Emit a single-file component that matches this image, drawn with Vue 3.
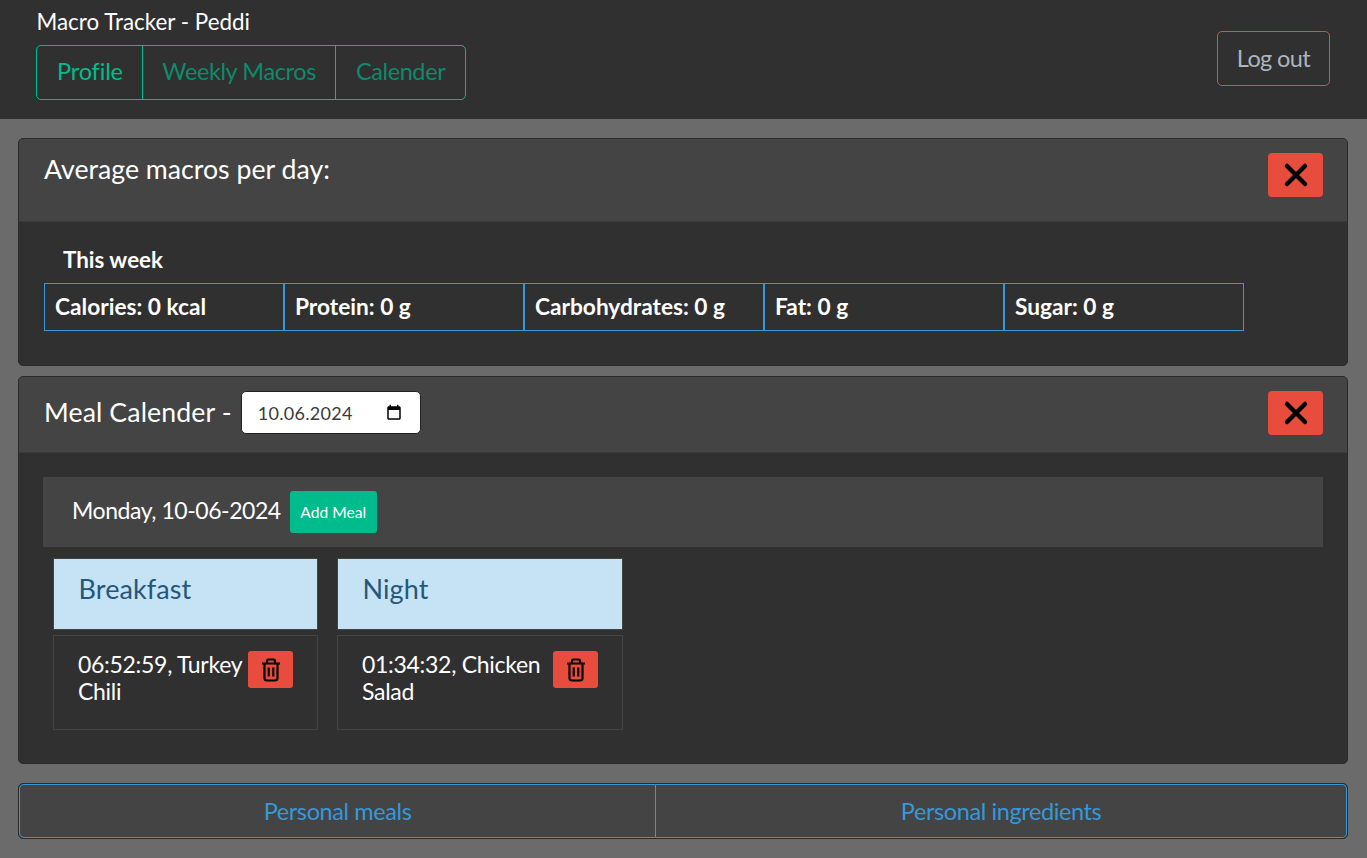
<template>
  <div class="page">
    <header class="topbar">
      <div class="brand">
        <div class="title">Macro Tracker - Peddi</div>
        <div class="nav-tabs">
          <a
            v-for="tab in tabs"
            :key="tab"
            class="nav-tab"
            :class="{ active: tab === activeTab }"
            @click="activeTab = tab"
          >{{ tab }}</a>
        </div>
      </div>
      <button class="logout">Log out</button>
    </header>

    <main class="content">
      <section class="card">
        <div class="card-head avg-head">
          <h2>Average macros per day:</h2>
          <button class="close-btn" aria-label="Close">
            <svg width="26" height="26" viewBox="0 0 26 26"><path d="M4 4L22 22M22 4L4 22" /></svg>
          </button>
        </div>
        <div class="card-body avg-body">
          <div class="week-label">This week</div>
          <div class="macro-row">
            <div v-for="macro in macros" :key="macro" class="macro-cell">{{ macro }}</div>
          </div>
        </div>
      </section>

      <section class="card">
        <div class="card-head cal-head">
          <div class="cal-title">
            <h2>Meal Calender -</h2>
            <label class="date-field">
              <input type="text" value="10.06.2024" />
              <svg width="18" height="18" viewBox="0 0 24 24">
                <path d="M19 3h-1V1h-2v2H8V1H6v2H5c-1.11 0-2 .9-2 2v14c0 1.1.89 2 2 2h14c1.1 0 2-.9 2-2V5c0-1.1-.9-2-2-2zm0 16H5V8h14v11z" />
              </svg>
            </label>
          </div>
          <button class="close-btn" aria-label="Close">
            <svg width="26" height="26" viewBox="0 0 26 26"><path d="M4 4L22 22M22 4L4 22" /></svg>
          </button>
        </div>
        <div class="card-body cal-body">
          <div class="day-bar">
            <span class="day-label">Monday, 10-06-2024</span>
            <button class="add-meal">Add Meal</button>
          </div>
          <div class="meal-cols">
            <div v-for="meal in meals" :key="meal.name" class="meal-col">
              <div class="meal-name">{{ meal.name }}</div>
              <div class="meal-item">
                <span class="meal-text">{{ meal.text }}</span>
                <button class="trash-btn" aria-label="Delete">
                  <svg width="24" height="24" viewBox="0 0 24 24">
                    <path d="M3 5.5h18M8 5.5V3a1.5 1.5 0 0 1 1.5-1.5h5A1.5 1.5 0 0 1 16 3v2.5M5.5 5.5V20a2.5 2.5 0 0 0 2.5 2.5h8a2.5 2.5 0 0 0 2.5-2.5V5.5M9.7 9.5v9M14.3 9.5v9" />
                  </svg>
                </button>
              </div>
            </div>
          </div>
        </div>
      </section>

      <div class="bottom-tabs">
        <a class="bottom-tab">Personal meals</a>
        <a class="bottom-tab">Personal ingredients</a>
      </div>
    </main>
  </div>
</template>

<script setup>
import { ref } from 'vue'

const tabs = ['Profile', 'Weekly Macros', 'Calender']
const activeTab = ref('Profile')

const macros = ['Calories: 0 kcal', 'Protein: 0 g', 'Carbohydrates: 0 g', 'Fat: 0 g', 'Sugar: 0 g']

const meals = [
  { name: 'Breakfast', text: '06:52:59, Turkey Chili' },
  { name: 'Night', text: '01:34:32, Chicken Salad' },
]
</script>

<style>
html,
body {
  margin: 0;
  background: #6b6b6b;
}
</style>

<style scoped>
* {
  box-sizing: border-box;
}

.page {
  min-height: 858px;
  background: #6b6b6b;
  color: #fff;
  font-family: "Lato", "Liberation Sans", sans-serif;
  font-size: 23.5px;
  letter-spacing: -0.4px;
}

button {
  font-family: inherit;
  cursor: pointer;
}

.topbar {
  height: 119px;
  background: #303030;
  display: flex;
  justify-content: space-between;
  padding: 9px 37px 0 36px;
}

.title {
  font-size: 22.4px;
  letter-spacing: 0;
  line-height: 26px;
  padding-left: 0.5px;
  margin-bottom: 10px;
}

.nav-tabs {
  display: flex;
  height: 55px;
  border: 1px solid #00bc8c;
  border-radius: 5px;
}

.nav-tab {
  display: flex;
  align-items: center;
  padding: 0 19.5px 3px;
  color: #0f8a6b;
  border-left: 1px solid #00bc8c;
}

.nav-tab:first-child {
  border-left: 0;
  padding: 0 19px 3px 20px;
  letter-spacing: -0.15px;
}

.nav-tab.active {
  color: #00bc8c;
}

.logout {
  width: 113px;
  height: 55px;
  margin-top: 22px;
  padding: 0 0 2px;
  background: transparent;
  border: 1px solid #d9503f;
  border-radius: 5px;
  color: #adb5bd;
  font-size: 23.5px;
  letter-spacing: -0.6px;
}

.content {
  padding: 19px 19px 0 18px;
  display: flex;
  flex-direction: column;
}

.card {
  background: #303030;
  border: 1px solid #2a2a2a;
  border-radius: 5px;
  overflow: hidden;
  margin-bottom: 10px;
}

.card-head {
  background: #444;
  border-bottom: 1px solid #3a3a3a;
  display: flex;
  justify-content: space-between;
  padding: 14px 24px 0 25px;
}

.avg-head {
  height: 83px;
}

.cal-head {
  height: 76px;
}

h2 {
  margin: 0;
  font-size: 26.7px;
  font-weight: 400;
  letter-spacing: 0;
  line-height: 32px;
}

.close-btn {
  width: 55px;
  height: 44px;
  background: #e74c3c;
  border: 0;
  border-radius: 4px;
  padding: 0;
  display: flex;
  align-items: center;
  justify-content: center;
}

.close-btn path {
  stroke: #000;
  stroke-width: 4.5;
  stroke-linecap: round;
  fill: none;
}

.avg-body {
  height: 143px;
  padding: 23px 25px 0;
}

.week-label {
  font-weight: 700;
  font-size: 22.4px;
  letter-spacing: 0;
  line-height: 30px;
  padding-left: 19px;
  margin-bottom: 8px;
}

.macro-row {
  display: flex;
}

.macro-cell {
  width: 240px;
  height: 48px;
  border: 1px solid #3498db;
  padding: 0 0 2px 10px;
  display: flex;
  align-items: center;
  font-weight: 700;
  font-size: 22.7px;
  letter-spacing: 0;
}

.cal-title {
  display: flex;
  align-items: center;
  align-self: flex-start;
  gap: 9px;
}

.cal-title h2 {
  letter-spacing: 0.1px;
  margin-bottom: 2px;
}

.date-field {
  width: 180px;
  height: 43px;
  background: #fff;
  border: 1px solid #222;
  border-radius: 5px;
  display: flex;
  align-items: center;
  justify-content: space-between;
  padding: 0 17px 0 16px;
}

.date-field input {
  width: 120px;
  border: 0;
  outline: 0;
  padding: 0;
  background: transparent;
  color: #3a3a3a;
  font-family: inherit;
  font-size: 18px;
  letter-spacing: 0.3px;
}

.date-field svg {
  fill: #000;
}

.cal-body {
  height: 310px;
  padding: 24px 24px 0;
}

.day-bar {
  height: 70px;
  background: #444;
  display: flex;
  align-items: center;
  gap: 9px;
  padding-left: 29px;
}

.day-label {
  font-size: 23px;
  letter-spacing: -0.45px;
  margin-bottom: 5px;
}

.add-meal {
  height: 42px;
  width: 87px;
  padding: 0;
  border: 0;
  border-radius: 3px;
  background: #00bc8c;
  color: #fff;
  font-size: 15.6px;
  letter-spacing: 0;
}

.meal-cols {
  display: flex;
  gap: 19px;
  padding: 11px 10px 0;
}

.meal-col {
  width: 265px;
}

.meal-col:nth-child(2) {
  width: 286px;
}

.meal-name {
  height: 72px;
  background: #c6e3f6;
  border: 1px solid #444;
  color: #25577b;
  font-size: 27px;
  letter-spacing: 0.1px;
  padding: 13px 0 0 24.5px;
  margin-bottom: 5px;
}

.meal-item {
  height: 95px;
  border: 1px solid #444;
  display: flex;
  justify-content: space-between;
  align-items: flex-start;
  padding: 15px 24px 0 24px;
  line-height: 27px;
  font-size: 23px;
  letter-spacing: -0.3px;
}

.meal-text {
  flex: 1;
  min-width: 0;
}

.trash-btn {
  flex: none;
  width: 45px;
  height: 37px;
  background: #e74c3c;
  border: 0;
  border-radius: 3px;
  padding: 0;
  display: flex;
  align-items: center;
  justify-content: center;
}

.trash-btn path {
  fill: none;
  stroke: #000;
  stroke-width: 2.2;
}

.bottom-tabs {
  display: flex;
  height: 56px;
  margin-top: 9px;
  background: #444;
  border: 1px solid #2a2a2a;
  border-radius: 5px;
}

.bottom-tab {
  flex: 1 1 auto;
  display: flex;
  align-items: center;
  justify-content: center;
  color: #3498db;
  border: 1px solid #3498db;
  border-left-width: 0;
}

.bottom-tab:first-child {
  border-left-width: 1px;
  border-radius: 5px 0 0 5px;
}

.bottom-tab:last-child {
  border-radius: 0 5px 5px 0;
  padding: 0 1px;
}
</style>
